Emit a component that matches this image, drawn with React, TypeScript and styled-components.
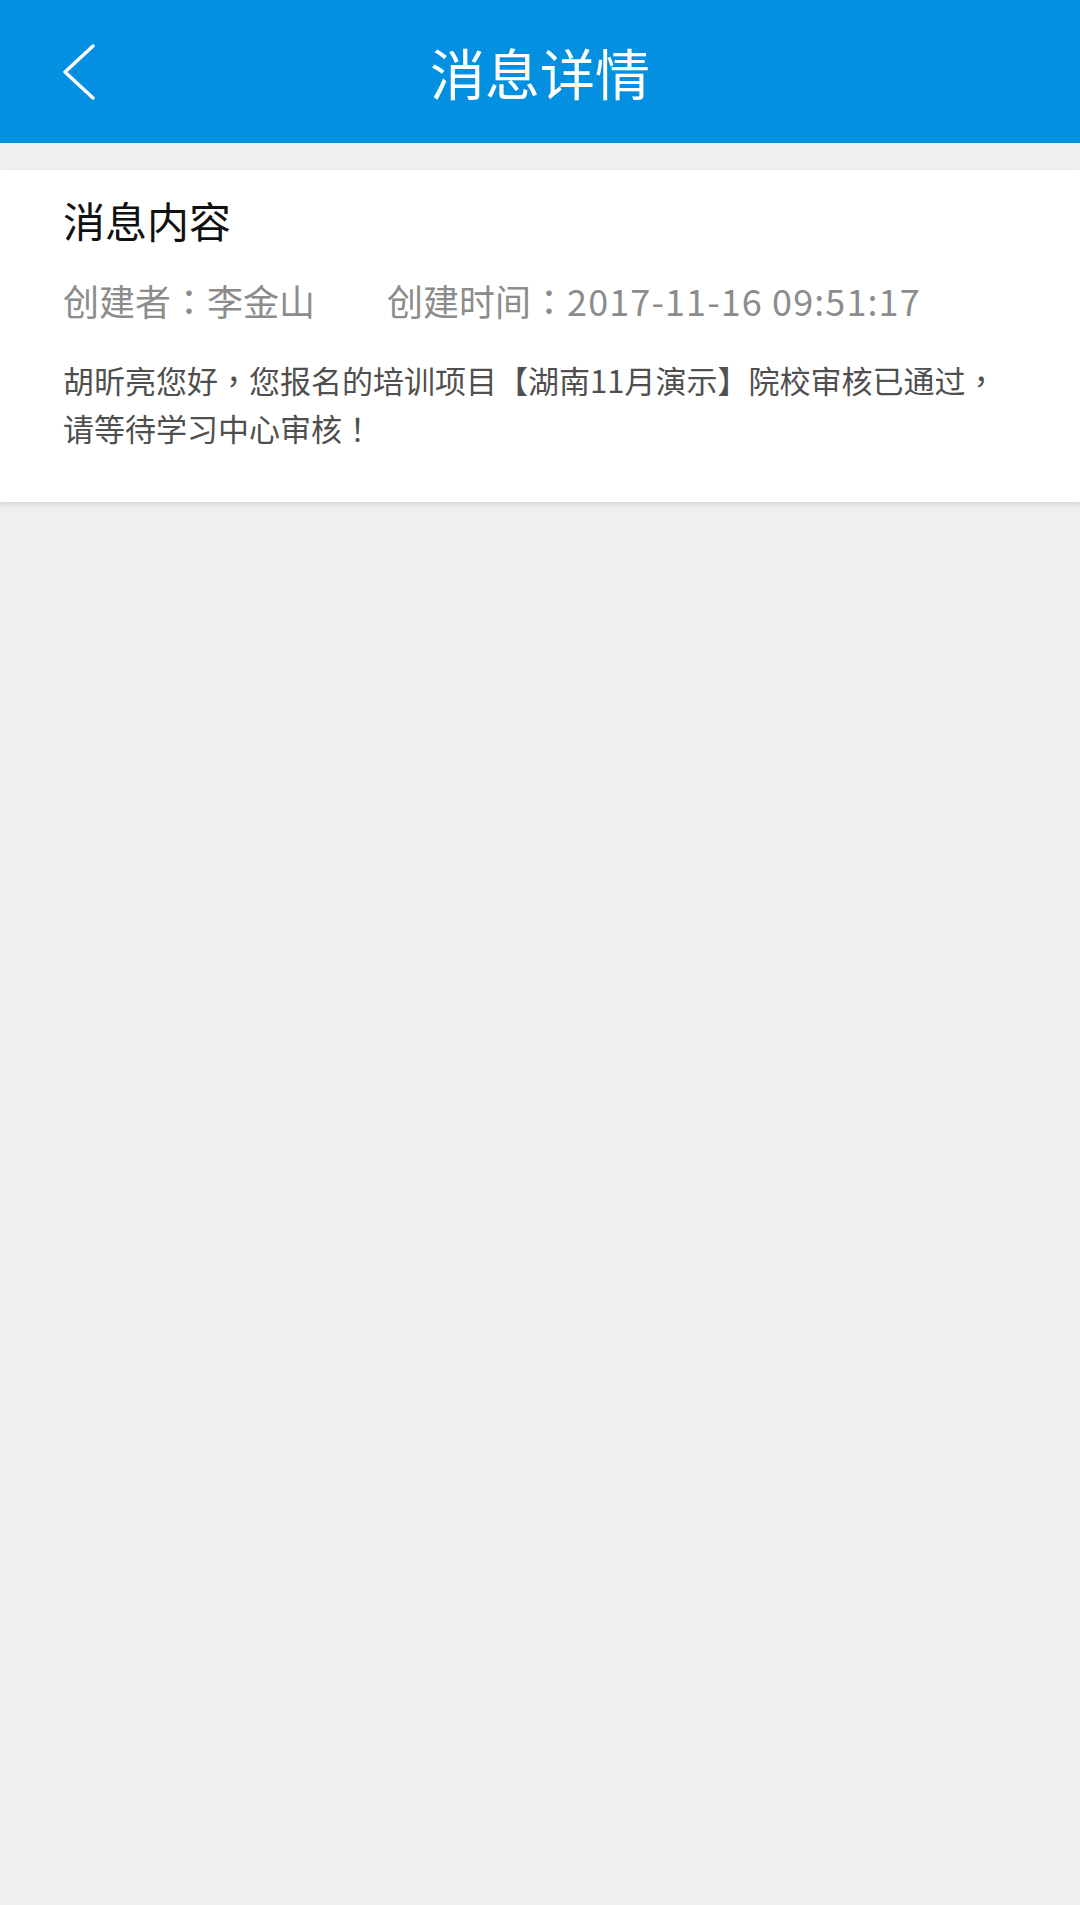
import React from "react";
import styled, { createGlobalStyle } from "styled-components";

const GlobalStyle = createGlobalStyle`
  html, body, #root {
    margin: 0;
    padding: 0;
    min-height: 100%;
    height: 100%;
  }
  body {
    background: #efeff1;
    font-family: "Noto Sans CJK SC", "Noto Sans", sans-serif;
  }
  * { box-sizing: border-box; }
`;

const Page = styled.div`
  min-height: 100vh;
  background: #efeff1;
  display: flex;
  flex-direction: column;
`;

const Header = styled.header`
  height: 143px;
  background: #0490e1;
  border-bottom: 1px solid #0a86d0;
  display: grid;
  grid-template-columns: 1fr auto 1fr;
  align-items: center;
  padding: 0 0 0 62px;
`;

const BackButton = styled.button`
  justify-self: start;
  width: 40px;
  height: 60px;
  padding: 0;
  margin: 2px 0 0 0;
  border: none;
  background: transparent;
  display: flex;
  align-items: center;
  justify-content: flex-start;
  cursor: pointer;
`;

const Title = styled.h1`
  margin: 0 0 0 -62px;
  font-size: 55px;
  line-height: 70px;
  font-weight: 400;
  color: #ffffff;
`;

const Content = styled.main`
  padding-top: 27px;
`;

const Card = styled.section`
  background: #ffffff;
  padding: 25px 63px 50px 63px;
  box-shadow: 0 2px 5px rgba(0, 0, 0, 0.12);
`;

const CardTitle = styled.h2`
  margin: 0;
  font-size: 42px;
  line-height: 50px;
  font-weight: 400;
  color: #111111;
`;

const MetaRow = styled.div`
  margin-top: 33px;
  display: flex;
  gap: 72px;
  font-size: 36px;
  line-height: 44px;
  color: #8c8c8c;
  white-space: nowrap;
`;

const MetaItem = styled.span``;

const Stamp = styled.span`
  letter-spacing: 1.1px;
`;

const Punct = styled.span`
  font-family: "Noto Sans CJK TC", "Noto Sans CJK SC", sans-serif;
`;

const Body = styled.p`
  margin: 34px 0 0 0;
  font-size: 31px;
  line-height: 48px;
  color: #4f4f4f;
`;

const ChevronLeft = () => (
  <svg width="34" height="56" viewBox="0 0 34 56" fill="none">
    <polyline
      points="31,2 3,28 31,54"
      stroke="#ffffff"
      strokeWidth="3.4"
      strokeLinecap="round"
      strokeLinejoin="round"
    />
  </svg>
);

export default function App() {
  return (
    <>
      <GlobalStyle />
      <Page>
        <Header>
          <BackButton aria-label="返回">
            <ChevronLeft />
          </BackButton>
          <Title>消息详情</Title>
          <span />
        </Header>
        <Content>
          <Card>
            <CardTitle>消息内容</CardTitle>
            <MetaRow>
              <MetaItem>
                创建者<Punct>：</Punct>李金山
              </MetaItem>
              <MetaItem>
                创建时间<Punct>：</Punct>
                <Stamp>2017-11-16 09:51:17</Stamp>
              </MetaItem>
            </MetaRow>
            <Body>
              胡昕亮您好<Punct>，</Punct>您报名的培训项目【湖南11月演示】院校审核已通过<Punct>，</Punct>
              <br />
              请等待学习中心审核<Punct>！</Punct>
            </Body>
          </Card>
        </Content>
      </Page>
    </>
  );
}
